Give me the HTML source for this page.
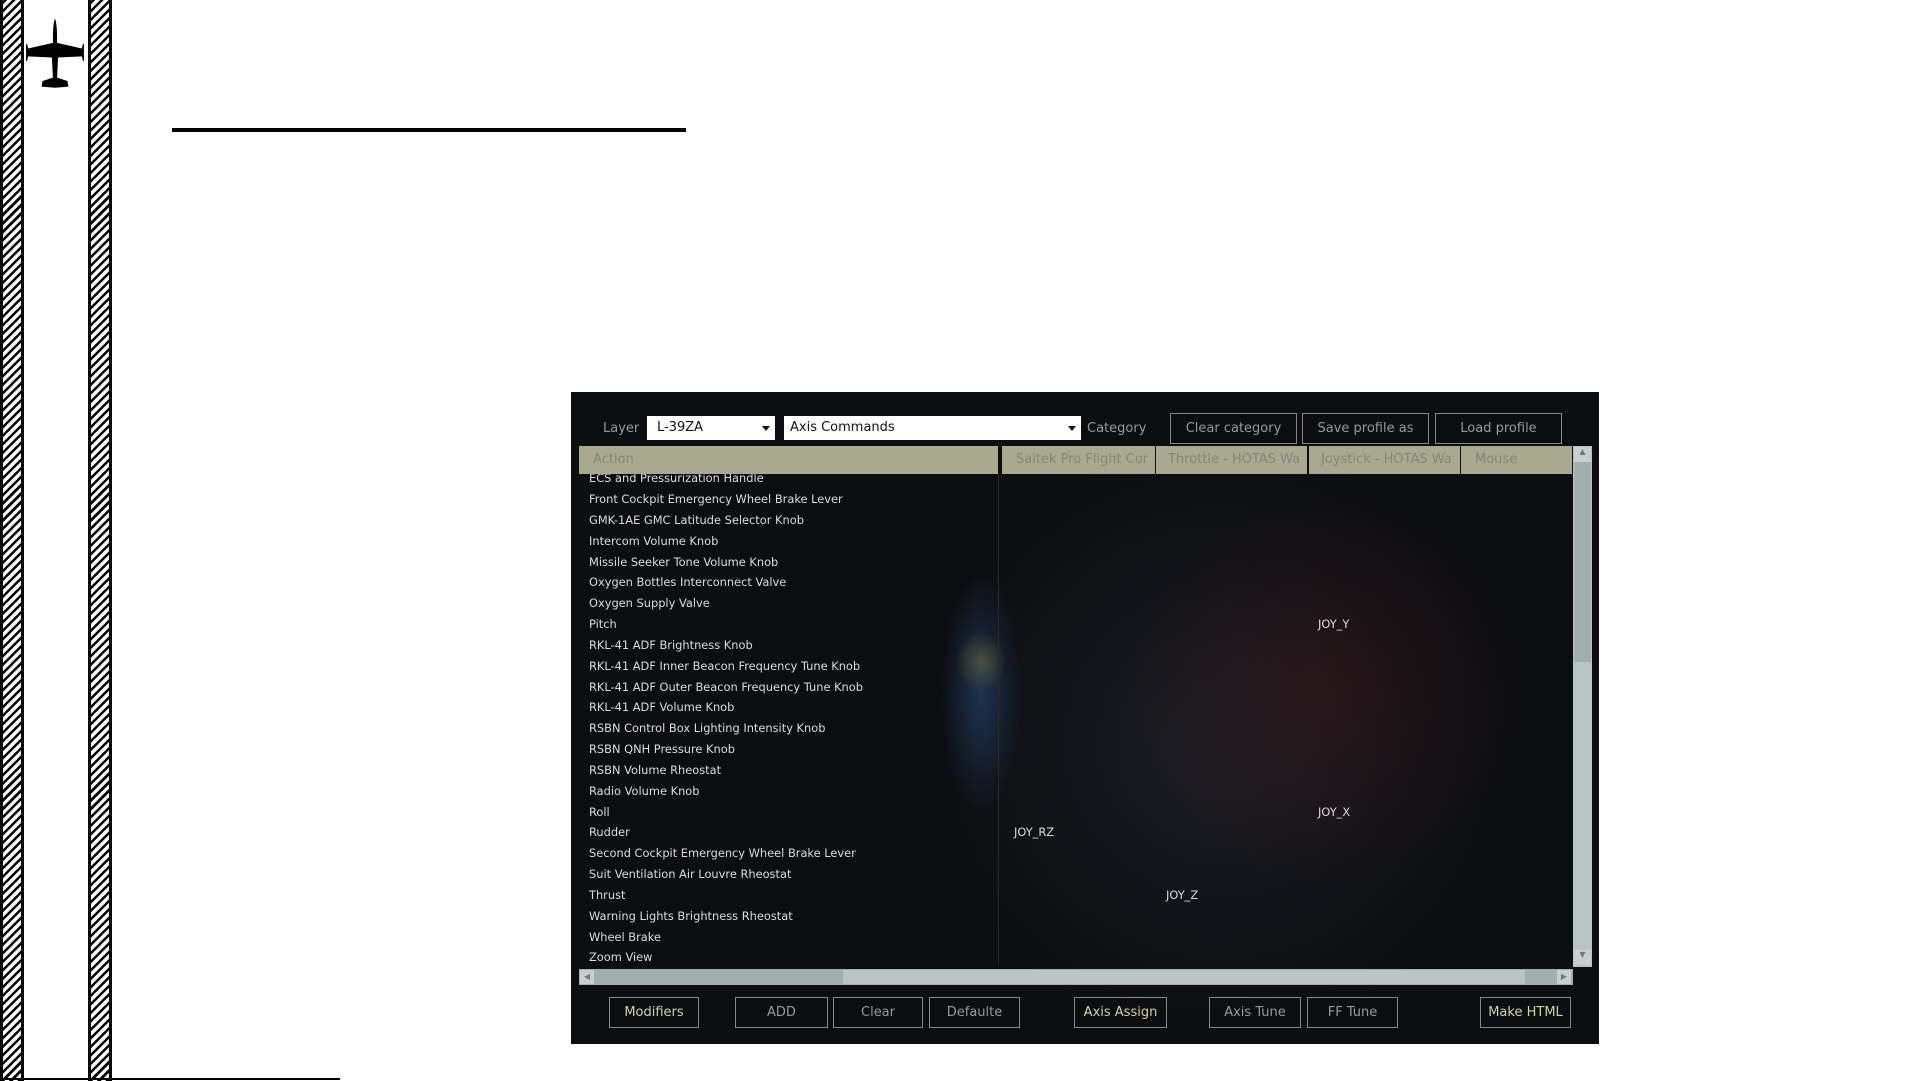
<!DOCTYPE html>
<html><head><meta charset="utf-8"><style>
*{margin:0;padding:0;box-sizing:border-box}
body{width:1921px;height:1081px;background:#fff;position:relative;overflow:hidden;font-family:"DejaVu Sans","Liberation Sans",sans-serif}
.stripe{position:absolute;top:0;height:1081px;width:24px;border-left:3px solid #000;border-right:3px solid #000;background:repeating-linear-gradient(-45deg,#000 0 2.5px,#fff 2.5px 6px)}
.abs{position:absolute}
#panel{left:571px;top:392px;width:1028px;height:652px;background:
radial-gradient(ellipse 40px 120px at 410px 300px,rgba(40,80,130,.55),transparent),
radial-gradient(ellipse 25px 30px at 410px 270px,rgba(150,120,20,.6),transparent),
radial-gradient(ellipse 200px 200px at 750px 300px,rgba(70,20,20,.35),transparent),
radial-gradient(ellipse 300px 300px at 650px 350px,rgba(40,45,55,.5),transparent),
#0c0d10;overflow:hidden}
.lbl{color:#999;font-size:13px}
.sel{background:#fff;color:#111;font-size:13px;height:24px;line-height:24px;padding-left:10px}
.sel:after{content:"";position:absolute;right:5px;top:10px;border-left:4px solid transparent;border-right:4px solid transparent;border-top:5px solid #111}
.btn{border:1px solid #888;color:#999;font-size:13px;text-align:center;position:absolute}
.hdr{background:#a9a98f;color:#85857a;font-size:13px;line-height:28px;height:28px;top:54px}
.row{position:absolute;color:#dcdcdc;font-size:11.4px;left:18px;line-height:14px}
.j{position:absolute;color:#dcdcdc;font-size:11.4px}
.y{color:#d4d4a0}
</style></head><body>
<div class="stripe" style="left:0"></div>
<div class="stripe" style="left:88px"></div>
<svg class="abs" style="left:24px;top:16px" width="62" height="74" viewBox="0 0 60 66" preserveAspectRatio="none">
<path fill="#000" d="M30 2 C28 8 28 14 28 24 L4 29 L3 25 L2 25 L2 40 L3 40 L4 36 L27 37 L28 55 L18 58 L17 63 L30 64 L43 63 L42 58 L32 55 L33 37 L56 36 L57 40 L58 40 L58 25 L57 25 L56 29 L32 24 C32 14 32 8 30 2Z"/>
</svg>
<div class="abs" style="left:172px;top:128px;width:514px;height:4px;background:#000"></div>
<div class="abs" style="left:0;top:1078px;width:340px;height:2px;background:#000"></div>

<div id="panel" class="abs">
<div class="abs lbl" style="left:32px;top:29px">Layer</div>
<div class="abs sel" style="left:76px;top:24px;width:128px">L-39ZA</div>
<div class="abs sel" style="left:213px;top:24px;width:297px;padding-left:6px">Axis Commands</div>
<div class="abs lbl" style="left:516px;top:29px">Category</div>
<div class="btn" style="left:599px;top:21px;width:127px;height:31px;line-height:29px">Clear category</div>
<div class="btn" style="left:731px;top:21px;width:127px;height:31px;line-height:29px">Save profile as</div>
<div class="btn" style="left:864px;top:21px;width:127px;height:31px;line-height:29px">Load profile</div>

<div class="abs hdr" style="left:8px;width:419px;padding-left:14px">Action</div>
<div class="abs hdr" style="left:431px;width:153px;padding-left:14px;overflow:hidden;white-space:nowrap">Saitek Pro Flight Cor</div>
<div class="abs hdr" style="left:585px;width:151px;padding-left:12px;overflow:hidden;white-space:nowrap">Throttle - HOTAS Wa</div>
<div class="abs hdr" style="left:738px;width:151px;padding-left:12px;overflow:hidden;white-space:nowrap">Joystick - HOTAS Wa</div>
<div class="abs hdr" style="left:890px;width:111px;padding-left:14px">Mouse</div>
<div class="abs" style="left:427px;width:1px;height:490px;background:#2a2a2a;top:82px"></div>

<div class="abs" style="left:8px;top:82px;width:994px;height:494px;overflow:hidden">
<div class="row" style="top:-3px;left:10px">ECS and Pressurization Handle</div>
<div class="row" style="top:18px;left:10px">Front Cockpit Emergency Wheel Brake Lever</div>
<div class="row" style="top:39px;left:10px">GMK-1AE GMC Latitude Selector Knob</div>
<div class="row" style="top:60px;left:10px">Intercom Volume Knob</div>
<div class="row" style="top:81px;left:10px">Missile Seeker Tone Volume Knob</div>
<div class="row" style="top:101px;left:10px">Oxygen Bottles Interconnect Valve</div>
<div class="row" style="top:122px;left:10px">Oxygen Supply Valve</div>
<div class="row" style="top:143px;left:10px">Pitch</div>
<div class="row" style="top:164px;left:10px">RKL-41 ADF Brightness Knob</div>
<div class="row" style="top:185px;left:10px">RKL-41 ADF Inner Beacon Frequency Tune Knob</div>
<div class="row" style="top:206px;left:10px">RKL-41 ADF Outer Beacon Frequency Tune Knob</div>
<div class="row" style="top:226px;left:10px">RKL-41 ADF Volume Knob</div>
<div class="row" style="top:247px;left:10px">RSBN Control Box Lighting Intensity Knob</div>
<div class="row" style="top:268px;left:10px">RSBN QNH Pressure Knob</div>
<div class="row" style="top:289px;left:10px">RSBN Volume Rheostat</div>
<div class="row" style="top:310px;left:10px">Radio Volume Knob</div>
<div class="row" style="top:331px;left:10px">Roll</div>
<div class="row" style="top:351px;left:10px">Rudder</div>
<div class="row" style="top:372px;left:10px">Second Cockpit Emergency Wheel Brake Lever</div>
<div class="row" style="top:393px;left:10px">Suit Ventilation Air Louvre Rheostat</div>
<div class="row" style="top:414px;left:10px">Thrust</div>
<div class="row" style="top:435px;left:10px">Warning Lights Brightness Rheostat</div>
<div class="row" style="top:456px;left:10px">Wheel Brake</div>
<div class="row" style="top:476px;left:10px">Zoom View</div>
<div class="j" style="left:739px;top:143px">JOY_Y</div>
<div class="j" style="left:739px;top:331px">JOY_X</div>
<div class="j" style="left:435px;top:351px">JOY_RZ</div>
<div class="j" style="left:587px;top:414px">JOY_Z</div>
</div>

<div class="abs" style="left:1002px;top:54px;width:19px;height:521px;background:#b8c4c2"></div>
<div class="abs" style="left:1003px;top:70px;width:17px;height:200px;background:#a2afaf"></div>
<div class="abs" style="left:1003px;top:55px;width:17px;height:15px;background:#c8d0ce;color:#777;font-size:8px;text-align:center">▲</div>
<div class="abs" style="left:1003px;top:558px;width:17px;height:15px;background:#c8d0ce;color:#777;font-size:8px;text-align:center">▼</div>

<div class="abs" style="left:8px;top:577px;width:994px;height:16px;background:#a2afaf"></div>
<div class="abs" style="left:272px;top:578px;width:682px;height:14px;background:#bac5c3"></div>
<div class="abs" style="left:9px;top:578px;width:14px;height:14px;background:#c8d0ce;color:#777;font-size:8px;text-align:center;line-height:14px">◀</div>
<div class="abs" style="left:986px;top:578px;width:14px;height:14px;background:#c8d0ce;color:#777;font-size:8px;text-align:center;line-height:14px">▶</div>

<div class="btn y" style="left:38px;top:605px;width:90px;height:31px;line-height:29px">Modifiers</div>
<div class="btn" style="left:164px;top:605px;width:93px;height:31px;line-height:29px">ADD</div>
<div class="btn" style="left:262px;top:605px;width:90px;height:31px;line-height:29px">Clear</div>
<div class="btn" style="left:358px;top:605px;width:91px;height:31px;line-height:29px">Defaulte</div>
<div class="btn y" style="left:503px;top:605px;width:93px;height:31px;line-height:29px">Axis Assign</div>
<div class="btn" style="left:638px;top:605px;width:92px;height:31px;line-height:29px">Axis Tune</div>
<div class="btn" style="left:736px;top:605px;width:91px;height:31px;line-height:29px">FF Tune</div>
<div class="btn y" style="left:909px;top:605px;width:91px;height:31px;line-height:29px">Make HTML</div>
</div>
</body></html>
